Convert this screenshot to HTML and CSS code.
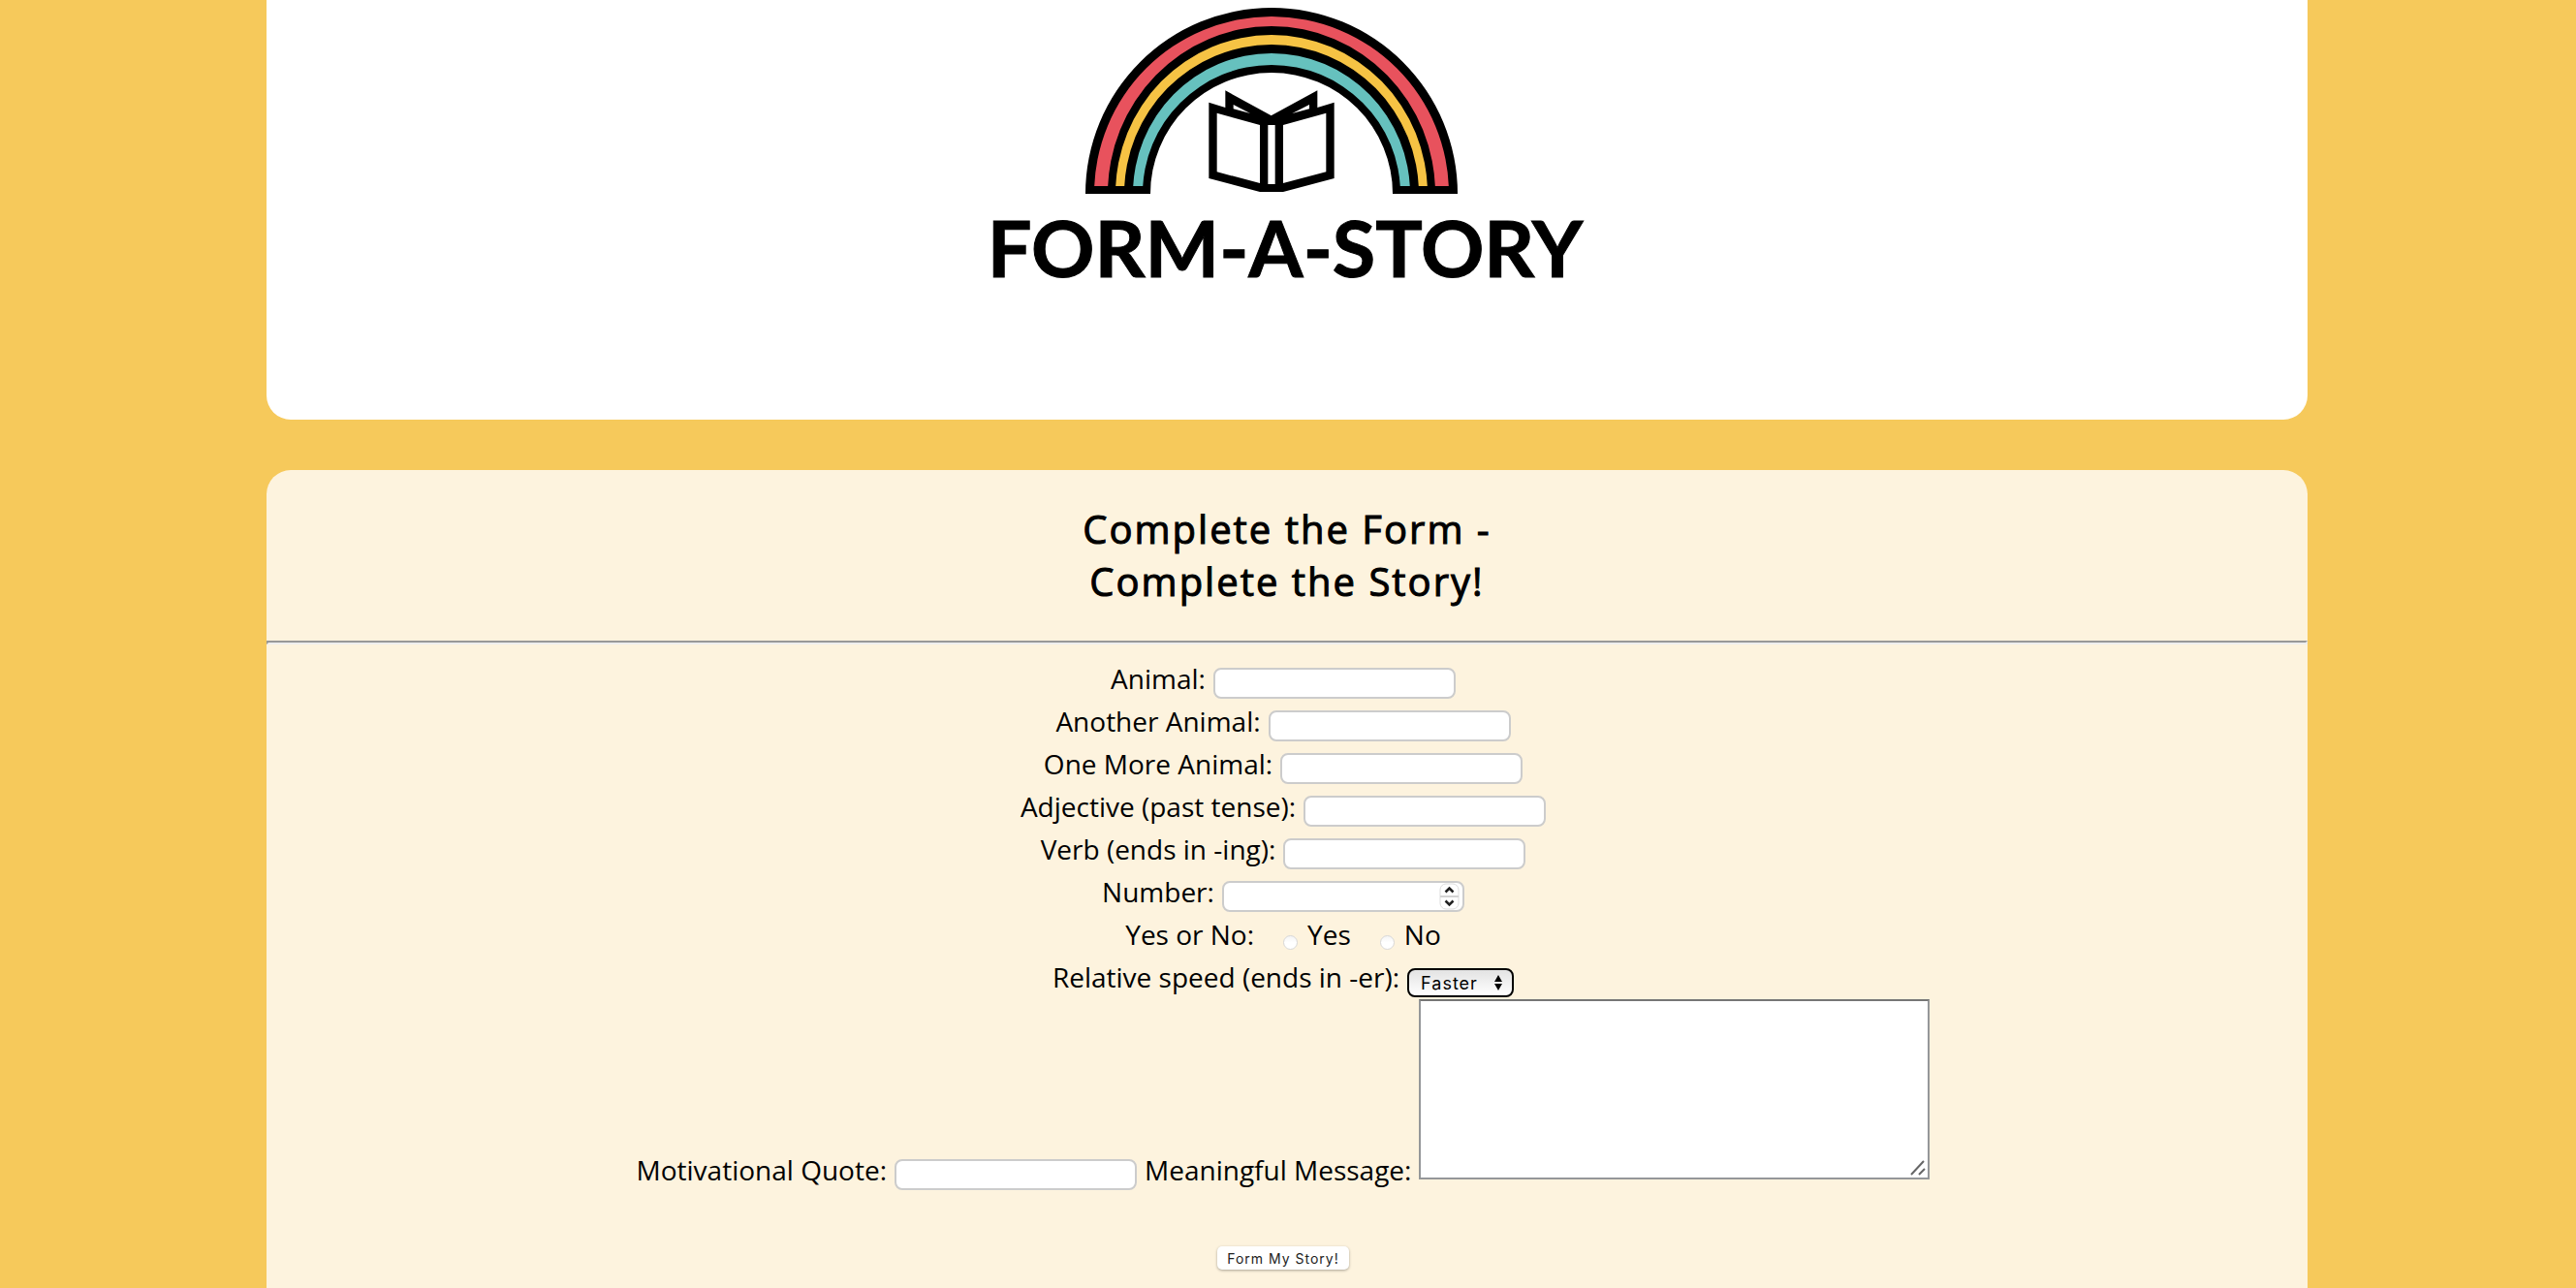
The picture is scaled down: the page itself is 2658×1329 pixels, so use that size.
FILE: index.html
```html
<!DOCTYPE html>
<html lang="en">
<head>
<meta charset="utf-8">
<title>Form-A-Story</title>
<link rel="stylesheet" href="styles.css">
</head>
<body>
<header class="banner">
  <svg class="logo" viewBox="0 0 640 310" role="img" aria-label="Form-A-Story">
    <path d="M112 200A192 192 0 0 1 496 200H429A125 125 0 0 0 179 200Z" fill="#000"/>
    <g>
      <path d="M121 192A183 183 0 0 1 487 192H473A169 173 0 0 0 135 192Z" fill="#e8525d" transform="translate(0 8)" clip-path="url(#feet)"/>
      <path d="M143 192A161 164 0 0 1 465 192H456A152 154 0 0 0 152 192Z" fill="#f6c344" transform="translate(0 8)" clip-path="url(#feet)"/>
      <path d="M161 192A143 145 0 0 1 447 192H437A133 133 0 0 0 171 192Z" fill="#66c1be" transform="translate(0 8)" clip-path="url(#feet)"/>
    </g>
    <clipPath id="feet"><rect width="640" height="184"/></clipPath>
    <path transform="translate(222 80) scale(.33333)" fill-rule="evenodd" d="M52 77 103 93V40L245 118 388 40V93L440 77V312L282 354H210L52 312ZM77 110V292L210 327V147ZM235 147V330H257V147ZM282 147V327L415 292V110ZM128 84V97L180 111ZM363 84 310 111 363 97Z"/>
    <text class="logo-text" x="318" y="286" text-anchor="middle">FORM-A-STORY</text>
  </svg>
</header>
<main class="card">
  <h1 class="title">Complete the Form -<br>Complete the Story!</h1>
  <hr class="rule">
  <form class="story">
    <div class="row"><label for="a1">Animal:</label><input class="field" id="a1" type="text"></div>
    <div class="row"><label for="a2">Another Animal:</label><input class="field" id="a2" type="text"></div>
    <div class="row"><label for="a3">One More Animal:</label><input class="field" id="a3" type="text"></div>
    <div class="row"><label for="adj">Adjective (past tense):</label><input class="field" id="adj" type="text"></div>
    <div class="row"><label for="verb">Verb (ends in -ing):</label><input class="field" id="verb" type="text"></div>
    <div class="row"><label for="num">Number:</label><input class="field number" id="num" type="number"></div>
    <div class="row choices" role="radiogroup" aria-labelledby="yn">
      <span id="yn">Yes or No:</span>
      <label class="choice"><input class="radio" type="radio" name="yn" value="yes">Yes</label>
      <label class="choice"><input class="radio" type="radio" name="yn" value="no">No</label>
    </div>
    <div class="row"><label for="speed">Relative speed (ends in -er):</label><select class="speed" id="speed"><option>Faster</option><option>Slower</option></select></div>
    <div class="row closing">
      <label for="quote">Motivational Quote:</label><input class="field" id="quote" type="text">
      <label for="msg">Meaningful Message:</label><textarea class="message" id="msg"></textarea>
    </div>
    <div class="row actions"><button class="submit" type="submit">Form My Story!</button></div>
  </form>
</main>
</body>
</html>
```
FILE: styles.css
```css
* { box-sizing: border-box; }

body {
  margin: 0;
  padding: 0 277px 0 275px;
  min-height: 100vh;
  display: flex;
  flex-direction: column;
  gap: 52px;
  background: #f6c95b;
  color: #000;
  font: 28px/44px "Open Sans", "Noto Sans", sans-serif;
}

.banner {
  display: flex;
  justify-content: center;
  padding-bottom: 123px;
  background: #fff;
  border-radius: 0 0 25px 25px;
}
.logo { display: block; width: 640px; height: 310px; }
.logo-text { font: 700 81px Lato, sans-serif; stroke: #000; stroke-width: 1px; }

.card {
  flex: 1;
  background: #fdf3de;
  border-radius: 25px 25px 0 0;
}
.title {
  margin: 0;
  padding: 34px 0;
  text-align: center;
  font-size: 40px;
  font-weight: 400;
  line-height: 54px;
  letter-spacing: 2px;
  -webkit-text-stroke: 1px #000;
}
.rule {
  margin: 0;
  height: 4px;
  border: 2px solid;
  border-color: #989898 #eee #eee #989898;
}

.story { padding: 13px 0 20px; }
.row {
  display: flex;
  justify-content: center;
  align-items: flex-end;
  gap: 8px;
  padding-right: 8px;
}
.closing { padding-top: 1px; }

.field {
  width: 250px;
  height: 32px;
  margin: 0 0 1px;
  padding: 2px 8px;
  border: 2px solid #ccc;
  border-radius: 8px;
  background: #fff;
  font: 18px Inter, sans-serif;
}
.number {
  appearance: textfield;
  background: #fff url("data:image/svg+xml,%3Csvg xmlns='http://www.w3.org/2000/svg' width='21' height='28'%3E%3Crect x='1' y='1' width='19' height='26' rx='6' fill='%23fff' stroke='%23ddd'/%3E%3Cpath d='M1 14H20' stroke='%23d4d4d4' stroke-width='2'/%3E%3Cpath d='M6.500 9.500 10.500 5.500 14.500 9.500M6.500 18.500 10.500 22.500 14.500 18.500' fill='none' stroke='%23222' stroke-width='2.500'/%3E%3C/svg%3E") no-repeat right 3px center;
}
.number::-webkit-inner-spin-button { appearance: none; }

.choices { gap: 30px; }
.choice { display: flex; align-items: flex-end; gap: 10px; }
.radio {
  appearance: none;
  width: 15px;
  height: 15px;
  margin: 0 0 6px;
  border: 1px solid #d8d8d8;
  border-radius: 50%;
  background: linear-gradient(#f4f4f4, #fff 50%);
}

.speed {
  appearance: none;
  width: 110px;
  height: 30px;
  margin: 0 0 1px;
  padding: 0 12px;
  border: 2px solid #000;
  border-radius: 8px;
  background:
    url("data:image/svg+xml,%3Csvg xmlns='http://www.w3.org/2000/svg' width='8' height='18'%3E%3Cpath d='M4 1 8 8H0ZM4 17 8 10H0Z'/%3E%3C/svg%3E") no-repeat right 10px center,
    linear-gradient(#e3e3e3, #fff);
  color: #000;
  font: 18px Inter, sans-serif;
  letter-spacing: 1px;
}

.message {
  width: 527px;
  height: 186px;
  margin: 0 0 12px;
  padding: 4px;
  border: 2px solid #959799;
  border-top-color: #767676;
  resize: none;
  background: #fff url("data:image/svg+xml,%3Csvg xmlns='http://www.w3.org/2000/svg' width='16' height='16'%3E%3Cpath d='M1 15 14 1M9 15 15 9' stroke='%23666' stroke-width='2'/%3E%3C/svg%3E") no-repeat right 2px bottom 2px;
  font: 18px Inter, sans-serif;
}

.actions { padding-top: 57px; }
.submit {
  width: 136px;
  height: 24px;
  padding: 0;
  border: 0;
  border-radius: 5px;
  background: #fff;
  box-shadow: 0 1px 3px #0005;
  color: #222;
  font: 14px Inter, sans-serif;
  letter-spacing: 1px;
}
```
